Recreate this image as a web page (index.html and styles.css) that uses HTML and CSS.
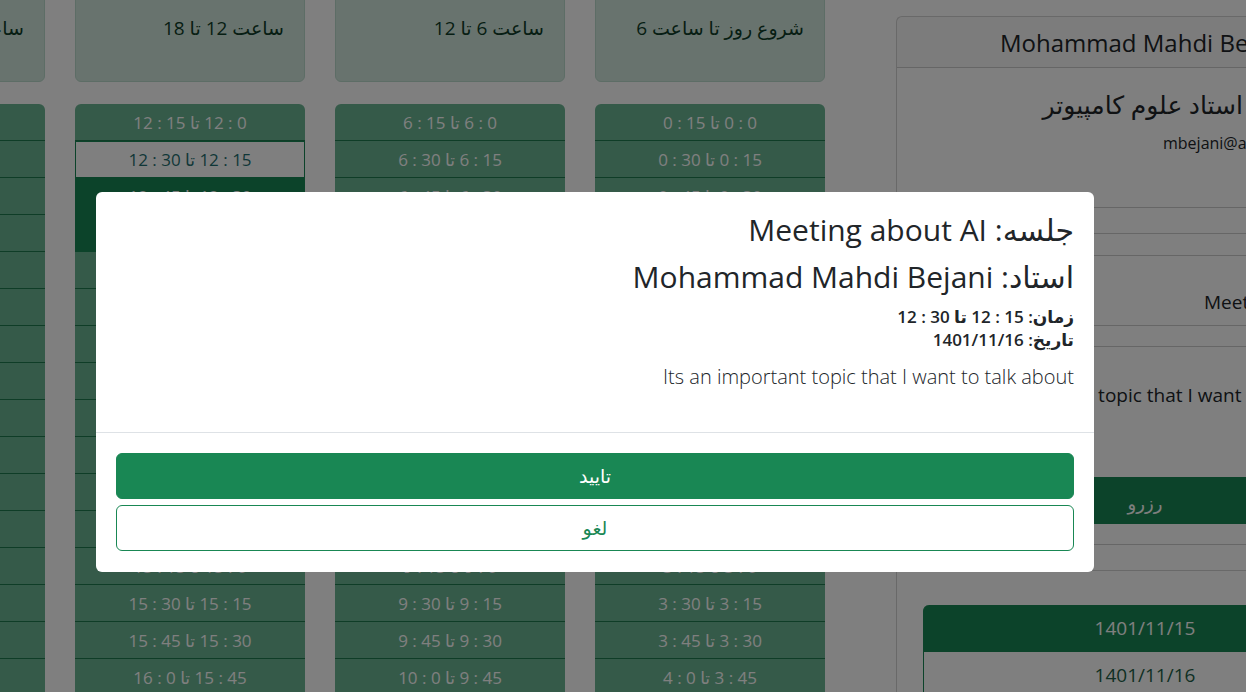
FILE: index.html
```html
<!DOCTYPE html>
<html lang="fa">
<head>
<meta charset="utf-8">
<title>رزرو جلسه</title>
<link rel="stylesheet" href="styles.css">
</head>
<body>
<div class="page">
  <div class="schedule">
    <section class="col">
      <div class="col-head">ساعت 18 تا 24</div>
      <div class="slots">
        <div class="slot">0 : 18 تا 15 : 18</div>
        <div class="slot">15 : 18 تا 30 : 18</div>
        <div class="slot">30 : 18 تا 45 : 18</div>
        <div class="slot">45 : 18 تا 0 : 19</div>
        <div class="slot">0 : 19 تا 15 : 19</div>
        <div class="slot">15 : 19 تا 30 : 19</div>
        <div class="slot">30 : 19 تا 45 : 19</div>
        <div class="slot">45 : 19 تا 0 : 20</div>
        <div class="slot">0 : 20 تا 15 : 20</div>
        <div class="slot">15 : 20 تا 30 : 20</div>
        <div class="slot">30 : 20 تا 45 : 20</div>
        <div class="slot">45 : 20 تا 0 : 21</div>
        <div class="slot">0 : 21 تا 15 : 21</div>
        <div class="slot">15 : 21 تا 30 : 21</div>
        <div class="slot">30 : 21 تا 45 : 21</div>
        <div class="slot">45 : 21 تا 0 : 22</div>
        <div class="slot">0 : 22 تا 15 : 22</div>
      </div>
    </section>
    <section class="col">
      <div class="col-head">ساعت 12 تا 18</div>
      <div class="slots">
        <div class="slot">0 : 12 تا 15 : 12</div>
        <div class="slot sel">15 : 12 تا 30 : 12</div>
        <div class="slot busy">30 : 12 تا 45 : 12</div>
        <div class="slot busy">45 : 12 تا 0 : 13</div>
        <div class="slot">0 : 13 تا 15 : 13</div>
        <div class="slot">15 : 13 تا 30 : 13</div>
        <div class="slot">30 : 13 تا 45 : 13</div>
        <div class="slot">45 : 13 تا 0 : 14</div>
        <div class="slot">0 : 14 تا 15 : 14</div>
        <div class="slot">15 : 14 تا 30 : 14</div>
        <div class="slot">30 : 14 تا 45 : 14</div>
        <div class="slot">45 : 14 تا 0 : 15</div>
        <div class="slot">0 : 15 تا 15 : 15</div>
        <div class="slot">15 : 15 تا 30 : 15</div>
        <div class="slot">30 : 15 تا 45 : 15</div>
        <div class="slot">45 : 15 تا 0 : 16</div>
        <div class="slot">0 : 16 تا 15 : 16</div>
      </div>
    </section>
    <section class="col">
      <div class="col-head">ساعت 6 تا 12</div>
      <div class="slots">
        <div class="slot">0 : 6 تا 15 : 6</div>
        <div class="slot">15 : 6 تا 30 : 6</div>
        <div class="slot">30 : 6 تا 45 : 6</div>
        <div class="slot">45 : 6 تا 0 : 7</div>
        <div class="slot">0 : 7 تا 15 : 7</div>
        <div class="slot">15 : 7 تا 30 : 7</div>
        <div class="slot">30 : 7 تا 45 : 7</div>
        <div class="slot">45 : 7 تا 0 : 8</div>
        <div class="slot">0 : 8 تا 15 : 8</div>
        <div class="slot">15 : 8 تا 30 : 8</div>
        <div class="slot">30 : 8 تا 45 : 8</div>
        <div class="slot">45 : 8 تا 0 : 9</div>
        <div class="slot">0 : 9 تا 15 : 9</div>
        <div class="slot">15 : 9 تا 30 : 9</div>
        <div class="slot">30 : 9 تا 45 : 9</div>
        <div class="slot">45 : 9 تا 0 : 10</div>
        <div class="slot">0 : 10 تا 15 : 10</div>
      </div>
    </section>
    <section class="col">
      <div class="col-head">شروع روز تا ساعت 6</div>
      <div class="slots">
        <div class="slot">0 : 0 تا 15 : 0</div>
        <div class="slot">15 : 0 تا 30 : 0</div>
        <div class="slot">30 : 0 تا 45 : 0</div>
        <div class="slot">45 : 0 تا 0 : 1</div>
        <div class="slot">0 : 1 تا 15 : 1</div>
        <div class="slot">15 : 1 تا 30 : 1</div>
        <div class="slot">30 : 1 تا 45 : 1</div>
        <div class="slot">45 : 1 تا 0 : 2</div>
        <div class="slot">0 : 2 تا 15 : 2</div>
        <div class="slot">15 : 2 تا 30 : 2</div>
        <div class="slot">30 : 2 تا 45 : 2</div>
        <div class="slot">45 : 2 تا 0 : 3</div>
        <div class="slot">0 : 3 تا 15 : 3</div>
        <div class="slot">15 : 3 تا 30 : 3</div>
        <div class="slot">30 : 3 تا 45 : 3</div>
        <div class="slot">45 : 3 تا 0 : 4</div>
        <div class="slot">0 : 4 تا 15 : 4</div>
      </div>
    </section>
  </div>

  <aside class="side">
    <div class="card prof">
      <div class="card-head">Mohammad Mahdi Bejani</div>
      <div class="card-body">
        <h4 class="prof-title">استاد علوم کامپیوتر</h4>
        <p class="prof-mail">mbejani@alzahra.ac.ir</p>
        <div class="row row-a"></div>
        <div class="row row-b"></div>
        <div class="row row-c"><span class="row-text t-meet">Meeting about AI</span></div>
        <div class="row row-d"></div>
        <div class="row row-e"><span class="row-text t-desc">Its an important topic that I want to talk about</span></div>
        <button class="btn-reserve" type="button">رزرو</button>
        <div class="row row-f"></div>
      </div>
    </div>
    <div class="card dates">
      <div class="date-list">
        <div class="date active">1401/11/15</div>
        <div class="date">1401/11/16</div>
        <div class="date">1401/11/17</div>
      </div>
    </div>
  </aside>
</div>

<div class="backdrop"></div>

<div class="modal" role="dialog">
  <div class="modal-body">
    <h2 class="m-title">جلسه: Meeting about AI</h2>
    <h2 class="m-title">استاد: Mohammad Mahdi Bejani</h2>
    <div class="m-info">
      <div>زمان: 15 : 12 تا 30 : 12</div>
      <div>تاریخ: 1401/11/16</div>
    </div>
    <p class="m-desc">Its an important topic that I want to talk about</p>
  </div>
  <div class="modal-foot">
    <button class="btn btn-ok" type="button">تایید</button>
    <button class="btn btn-cancel" type="button">لغو</button>
  </div>
</div>
</body>
</html>
```

FILE: styles.css
```css
* { box-sizing: border-box; }

html, body {
  margin: 0;
  height: 692px;
  overflow: hidden;
}

body {
  font-family: "Open Sans", "Noto Sans", "DejaVu Sans", sans-serif;
  color: #212529;
  background: #ffffff;
}

.page {
  display: flex;
  align-items: flex-start;
  gap: 71px;
  width: max-content;
  margin-left: -185px;
  margin-top: -10px;
}

.schedule {
  display: flex;
  gap: 30px;
}

.col {
  width: 230px;
}

.col-head {
  height: 92px;
  padding: 22px 20px 0;
  background: #d1e7dd;
  border: 1px solid #badbcc;
  border-radius: 6px;
  direction: rtl;
  text-align: right;
  font-size: 19px;
  line-height: 30px;
  color: #0f3d28;
}

.slots {
  margin-top: 22px;
  border-radius: 6px 6px 0 0;
  overflow: hidden;
}

.slot {
  height: 37px;
  border-bottom: 1px solid #1f7a4f;
  background: #6ab492;
  color: #ffffff;
  direction: rtl;
  text-align: center;
  font-size: 17px;
  line-height: 37px;
}

.slot.busy {
  background: #198754;
  border-bottom-color: #198754;
}

.slot.sel {
  background: #ffffff;
  color: #1f6f70;
  border: 1px solid #198754;
  line-height: 36px;
}

/* side cards */
.side {
  width: 476px;
  margin-top: 26px;
}

.card {
  background: #ffffff;
  border: 1px solid rgba(0, 0, 0, 0.175);
}

.prof {
  border-radius: 6px 6px 0 0;
}

.card-head {
  height: 51px;
  padding-left: 103px;
  border-bottom: 1px solid rgba(0, 0, 0, 0.175);
  background: rgba(33, 37, 41, 0.03);
  font-size: 24px;
  line-height: 52px;
  white-space: nowrap;
}

.card-body {
  padding: 22px 0 0;
}

.prof-title {
  margin: 0 0 12px;
  padding-right: 128px;
  direction: rtl;
  text-align: right;
  font-size: 25px;
  font-weight: 500;
  line-height: 29px;
}

.prof-mail {
  margin: 0;
  padding-left: 266px;
  font-size: 16px;
  line-height: 24px;
  white-space: nowrap;
}

.row {
  border-top: 1px solid rgba(0, 0, 0, 0.2);
}

.row-a { margin-top: 52px; height: 26px; }
.row-b { height: 22px; }
.row-c { height: 70px; padding: 33px 0 0 307px; }
.row-d { height: 21px; }
.row-e { height: 131px; padding: 35px 0 0 0; }
.row-f { margin-top: 20px; height: 26px; }

.row-text {
  display: block;
  font-size: 19px;
  line-height: 26px;
  white-space: nowrap;
}

.t-desc {
  padding-left: 54px;
}

.btn-reserve {
  display: block;
  width: 456px;
  height: 47px;
  margin-left: 20px;
  border: 0;
  background: #198754;
  color: #ffffff;
  font-family: inherit;
  font-size: 18px;
  line-height: 50px;
}

.dates {
  border-top: 0;
  height: 200px;
  padding: 34px 0 0 26px;
}

.date-list {
  width: 444px;
}

.date {
  height: 47px;
  border: 1px solid #198754;
  border-top: 0;
  color: #1e5f48;
  text-align: center;
  font-size: 19px;
  line-height: 46px;
}

.date.active {
  background: #198754;
  color: #ffffff;
  border-radius: 6px 6px 0 0;
}

/* modal */
.backdrop {
  position: fixed;
  inset: 0;
  background: rgba(0, 0, 0, 0.5);
}

.modal {
  position: absolute;
  left: 96px;
  top: 192px;
  width: 998px;
  background: #ffffff;
  border-radius: 6px;
  direction: rtl;
  text-align: right;
}

.modal-body {
  padding: 19px 20px 20px;
}

.m-title {
  margin: 0 0 9px;
  font-size: 30px;
  font-weight: 500;
  line-height: 38px;
}

.m-info {
  margin-top: 5px;
  font-size: 17px;
  font-weight: 600;
  line-height: 23px;
}

.m-desc {
  margin: 11px 0 20px;
  font-size: 20px;
  font-weight: 300;
  line-height: 30px;
}

.modal-foot {
  border-top: 1px solid #dee2e6;
  padding: 20px 20px 21px;
  display: flex;
  flex-direction: column;
  gap: 6px;
}

.btn {
  height: 46px;
  border-radius: 6px;
  font-family: inherit;
  font-size: 19px;
  font-weight: 500;
  cursor: pointer;
}

.btn-ok {
  background: #198754;
  border: 1px solid #198754;
  color: #ffffff;
}

.btn-cancel {
  background: #ffffff;
  border: 1px solid #198754;
  color: #198754;
  font-weight: 400;
}
```
